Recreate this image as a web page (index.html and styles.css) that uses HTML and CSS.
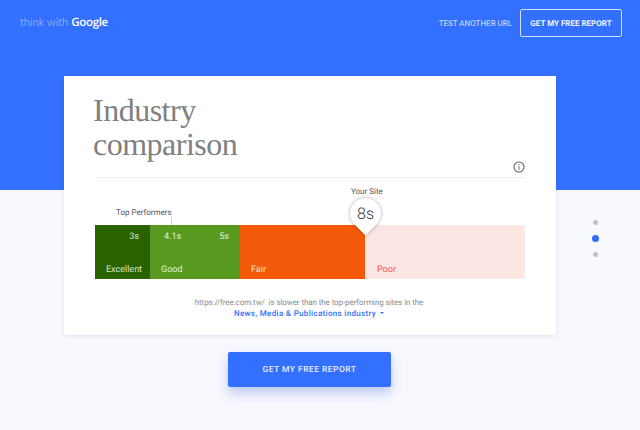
FILE: index.html
```html
<!DOCTYPE html>
<html lang="en">
<head>
<meta charset="utf-8">
<title>Industry comparison</title>
<link rel="stylesheet" href="styles.css">
</head>
<body>
<header class="topbar">
  <div class="logo"><span class="logo-think">think with</span> <span class="logo-google">Google</span></div>
  <nav class="topnav">
    <a class="topnav-link">TEST ANOTHER URL</a>
    <a class="topnav-btn">GET MY FREE REPORT</a>
  </nav>
</header>
<main class="card">
  <h1 class="title">Industry<br>comparison</h1>
  <div class="info-row">
    <svg class="info-icon" viewBox="0 0 12 12" width="12" height="12" aria-hidden="true">
      <circle cx="6" cy="6" r="5" fill="none" stroke="#666" stroke-width="1.1"/>
      <rect x="5.5" y="5.2" width="1" height="3.6" fill="#666"/>
      <rect x="5.5" y="3.1" width="1" height="1.1" fill="#666"/>
    </svg>
  </div>
  <div class="chart">
    <div class="top-label">Top Performers</div>
    <div class="top-tick"></div>
    <div class="your-label">Your Site</div>
    <div class="pin"><div class="pin-shape"></div><span class="pin-text">8s</span></div>
    <div class="bar">
      <div class="seg seg-excellent"><span class="seg-top seg-top-end">3s</span><span class="seg-name">Excellent</span></div>
      <div class="seg seg-good">
        <div class="seg-top seg-top-split"><span>4.1s</span><span>5s</span></div>
        <span class="seg-name">Good</span>
      </div>
      <div class="seg seg-fair"><span class="seg-name">Fair</span></div>
      <div class="seg seg-poor"><span class="seg-name">Poor</span></div>
    </div>
  </div>
  <p class="summary">https://free.com.tw/&nbsp; is slower than the top-performing sites in the</p>
  <p class="industry">News, Media &amp; Publications industry<span class="caret"></span></p>
</main>
<div class="cta-row"><a class="cta">GET MY FREE REPORT</a></div>
<div class="dots"><span class="dot"></span><span class="dot dot-active"></span><span class="dot"></span></div>
</body>
</html>
```
FILE: styles.css
```css
* { box-sizing: border-box; }
html, body { height: 100%; }
body {
  margin: 0;
  position: relative;
  overflow: hidden;
  font-family: Roboto, "Liberation Sans", sans-serif;
  text-rendering: geometricPrecision;
  background: linear-gradient(#3370ff 190px, #f8f9ff 190px);
}
.topbar {
  height: 76px;
  padding: 9px 18px 0 20px;
  display: flex;
  justify-content: space-between;
  align-items: flex-start;
}
.logo {
  margin-top: 4px;
  font-family: Lato, sans-serif;
  font-size: 11.3px;
  line-height: 20px;
  color: #fff;
}
.logo-think { font-weight: 300; opacity: .6; }
.logo-google { font-family: "Open Sans", sans-serif; font-size: 11.5px; font-weight: 600; letter-spacing: -.3px; }
.topnav { display: flex; align-items: center; gap: 8px; height: 28px; }
.topnav-link { font-size: 8px; color: #d6e2ff; }
.topnav-btn {
  width: 102px;
  height: 28px;
  border: 1px solid #d6e2ff;
  border-radius: 2px;
  display: flex;
  align-items: center;
  justify-content: center;
  font-size: 8px;
  font-weight: 700;
  color: #f2f6ff;
}
.card {
  width: 492px;
  height: 259px;
  margin-left: 64px;
  padding: 17px 31px 0 29px;
  background: #fff;
  box-shadow: 0 1px 4px rgba(40, 50, 90, .12);
}
.title {
  margin: 0;
  font-family: "Liberation Serif", serif;
  font-weight: 400;
  font-size: 32px;
  line-height: 34px;
  letter-spacing: -.5px;
  color: #808080;
}
.info-row {
  height: 15px;
  margin: 2px 0 0 2px;
  border-bottom: 1px solid #eee;
  display: flex;
  justify-content: flex-end;
  align-items: flex-start;
}
.info-icon { margin-top: -2px; }
.chart { position: relative; margin: 47px 0 0 2px; }
.bar { display: flex; height: 54px; }
.seg { position: relative; height: 100%; }
.seg-excellent { width: 55px; background: #2a6200; color: #d5e6c6; }
.seg-good { width: 90px; background: #589a20; color: #e2efd6; }
.seg-fair { width: 126px; background: #f25a0a; color: #fde0cc; border-right: 1px solid #f7e5e0; }
.seg-poor { flex: 1; background: #fce6e4; color: #f4564a; }
.seg-top, .seg-name { position: absolute; font-size: 9px; line-height: 12px; }
.seg-top { top: 6px; }
.seg-name { top: 39px; }
.seg-top-end { right: 11px; }
.seg-excellent .seg-name { left: 11px; }
.seg-top-split { left: 14px; right: 11px; display: flex; justify-content: space-between; }
.seg-good .seg-name { left: 11px; }
.seg-fair .seg-name { left: 11px; }
.seg-poor .seg-name { left: 11px; }
.top-label, .your-label {
  position: absolute;
  font-size: 8px;
  line-height: 11px;
  color: #555;
}
.top-label { left: 21px; top: -18px; }
.top-tick { position: absolute; left: 76px; top: -8px; width: 1px; height: 8px; background: #c5d8b5; }
.your-label { left: 256px; top: -39px; }
.pin { position: absolute; left: 255px; top: -27px; width: 31px; height: 31px; z-index: 1; }
.pin-shape {
  width: 31px;
  height: 31px;
  background: #fff;
  border-radius: 50% 50% 0 50%;
  transform: rotate(45deg);
  box-shadow: 0 0 4px rgba(0, 0, 0, .35);
}
.pin-text {
  position: absolute;
  inset: 0;
  display: flex;
  align-items: center;
  justify-content: center;
  font-size: 16px;
  font-weight: 300;
  color: #333;
}
.summary {
  margin: 18px 0 0;
  text-align: center;
  font-size: 8px;
  line-height: 11px;
  letter-spacing: -.085px;
  color: #8c8c8c;
}
.industry {
  margin: 0;
  text-align: center;
  font-size: 8px;
  line-height: 12px;
  font-weight: 500;
  letter-spacing: .33px;
  color: #3370ff;
}
.caret {
  display: inline-block;
  margin-left: 4px;
  vertical-align: 2px;
  border: 2.5px solid transparent;
  border-top-color: #3370ff;
  border-bottom-width: 0;
}
.cta-row { margin: 17px 0 0 228px; }
.cta {
  width: 163px;
  height: 35px;
  display: flex;
  align-items: center;
  justify-content: center;
  background: #3370ff;
  border-radius: 2px;
  font-size: 8.5px;
  font-weight: 500;
  letter-spacing: .45px;
  color: #e6edff;
  box-shadow: 0 6px 12px rgba(50, 90, 200, .3);
}
.dots {
  position: absolute;
  left: 591px;
  top: 220px;
  width: 8px;
  display: flex;
  flex-direction: column;
  align-items: center;
  gap: 10px;
}
.dot { width: 5px; height: 5px; border-radius: 50%; background: #bfc1c8; margin: 0; }
.dot-active { width: 7px; height: 7px; background: #2f6cf6; }
```
